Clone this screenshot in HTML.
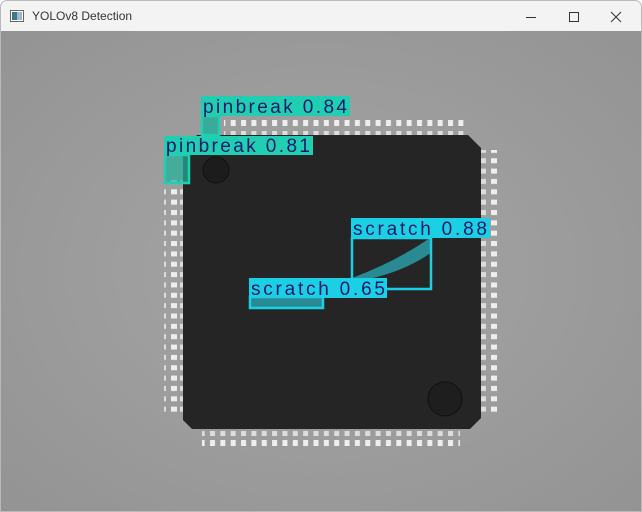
<!DOCTYPE html>
<html><head><style>
body{margin:0;width:642px;height:512px;overflow:hidden;background:#fff;font-family:"Liberation Sans",sans-serif}
.win{position:absolute;left:0;top:0;width:640px;height:510px;border:1px solid #b9b9b9;border-radius:7px 7px 0 0;overflow:hidden;background:#f3f3f3}
.title{height:30px;position:relative;font-size:12px;color:#333}
</style></head><body>
<div class="win">
<div class="title">
<svg style="position:absolute;left:9px;top:9px" width="14" height="12"><rect x="0.5" y="0.5" width="13" height="11" fill="#fff" stroke="#666"/><rect x="2" y="2" width="5" height="8" fill="#3a7a8a"/><rect x="7" y="2" width="5" height="8" fill="#9bc"/></svg>
<span style="position:absolute;left:31px;top:8px">YOLOv8 Detection</span>
<svg style="position:absolute;left:520px;top:9px" width="110" height="14" stroke="#333" fill="none" stroke-width="1"><line x1="5" y1="7.5" x2="15" y2="7.5"/><rect x="48.5" y="2.5" width="9" height="9"/><path d="M90 2L100 12M100 2L90 12"/></svg>
</div>
<svg width="640" height="480" style="display:block">
<defs>
<radialGradient id="bg" cx="50%" cy="50%" r="75%"><stop offset="0" stop-color="#a6a6a6"/><stop offset="1" stop-color="#929292"/></radialGradient>
<pattern id="pt" width="10.35" height="20" patternUnits="userSpaceOnUse"><rect x="3" y="0" width="5" height="6" fill="#eee"/><rect x="3" y="11" width="5" height="5" fill="#ddd"/></pattern>
<pattern id="pl" width="20" height="10.35" patternUnits="userSpaceOnUse"><rect x="0" y="3" width="6" height="5" fill="#ddd"/><rect x="11" y="3" width="6" height="5" fill="#eee"/></pattern>
</defs>
<rect width="640" height="480" fill="url(#bg)"/>
<g transform="translate(-1,-31)">
<rect x="224" y="116" width="240" height="19" fill="url(#pt)"/>
<rect x="202" y="428" width="258" height="19" fill="url(#pt)"/>
<rect x="164" y="180" width="20" height="235" fill="url(#pl)"/>
<rect x="476" y="150" width="22" height="265" fill="url(#pl)"/>
<path d="M197 135H468L481 148V418L470 429H192L183 420V149Z" fill="#252525"/>
<circle cx="216" cy="170" r="13" fill="#1c1c1c" stroke="#111"/>
<circle cx="445" cy="399" r="17" fill="#1e1e1e" stroke="#111"/>
<path d="M352 278Q395 262 430 238L432 252Q400 275 352 282Z" fill="#2a8a94"/>
<rect x="251" y="298" width="72" height="9" fill="#2a8a94"/>
<rect x="202" y="116" width="17" height="19" fill="#1fb09a" opacity=".8"/>
<rect x="165" y="155" width="24" height="28" fill="#1fb09a" opacity=".7"/>
<g fill="none" stroke-width="2.5">
<rect x="202" y="116" width="17" height="19" stroke="#20cfb2"/>
<rect x="165" y="155" width="24" height="28" stroke="#20cfb2"/>
<rect x="352" y="238" width="79" height="51" stroke="#1bd0e4"/>
<rect x="250" y="297" width="73" height="11" stroke="#1bd0e4"/>
</g>
<g font-size="19" fill="#16186a" font-family="Liberation Sans,sans-serif" lengthAdjust="spacing">
<rect x="201" y="96" width="149" height="20" fill="#20cfb2"/><text x="203" y="113" textLength="144">pinbreak 0.84</text>
<rect x="164" y="136" width="149" height="19" fill="#20cfb2"/><text x="166" y="152" textLength="144">pinbreak 0.81</text>
<rect x="351" y="218" width="139" height="20" fill="#1bd0e4"/><text x="353" y="235" textLength="134">scratch 0.88</text>
<rect x="249" y="278" width="138" height="20" fill="#1bd0e4"/><text x="251" y="295" textLength="134">scratch 0.65</text>
</g>
</g>
</svg>
</div>
</body></html>
